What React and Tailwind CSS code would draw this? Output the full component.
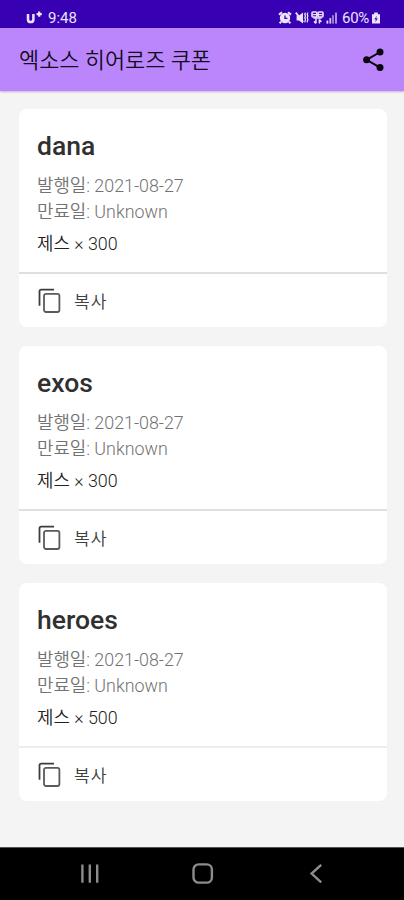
import React from 'react';

const COUPONS = [
  { code: 'dana', issued: '2021-08-27', expires: 'Unknown', reward: '제스 × 300', divider: 'bg-[#dfdfdf]' },
  { code: 'exos', issued: '2021-08-27', expires: 'Unknown', reward: '제스 × 300', divider: 'bg-[#dfdfdf]' },
  { code: 'heroes', issued: '2021-08-27', expires: 'Unknown', reward: '제스 × 500', divider: 'bg-[#ededed]' },
];

function StatusBar() {
  return (
    <div className="flex h-7 shrink-0 items-end justify-between bg-[#3700b3] pb-[2px] pl-[26px] pr-[24px] text-[#ebe4f8]">
      <div className="flex items-center">
        <svg className="h-[14px] w-[17px]" viewBox="0 0 17 14" fill="none" stroke="currentColor">
          <path d="M2 3v5.4a2.7 2.7 0 0 0 5.4 0V3" strokeWidth="2.5" />
          <path d="M13.2 0.6v5.2M10.6 3.2h5.2" strokeWidth="2.2" />
        </svg>
        <span className="ml-[5px] text-[15px] leading-4">9:48</span>
      </div>
      <div className="flex items-center">
        {/* alarm */}
        <svg className="h-[14px] w-[14px]" viewBox="0 0 14 14" fill="none" stroke="currentColor">
          <circle cx="7" cy="7" r="5.2" fill="currentColor" stroke="none" />
          <path d="M1 3.6l3-2.4M13 3.6l-3-2.4M3.2 10.6l-1.6 1.6M10.8 10.6l1.6 1.6" strokeWidth="2" />
          <path d="M7 4.4v3h2.4" stroke="#3700b3" strokeWidth="1.3" />
        </svg>
        {/* mute + vibrate */}
        <svg className="ml-[3px] h-[14px] w-[14px]" viewBox="0 0 14 14" fill="none" stroke="currentColor">
          <path d="M1.6 4.6H4L8 1.6v10.8L4 9.4H1.6z" fill="currentColor" stroke="none" />
          <path d="M0.8 1.6l7.4 9.4" strokeWidth="1.8" />
          <path d="M10.4 1.6l-.6 1.7.6 1.7-.6 1.7.6 1.7-.6 3M12.8 1.6l-.6 1.7.6 1.7-.6 1.7.6 1.7-.6 3" strokeWidth="1.3" />
        </svg>
        {/* network */}
        <svg className="ml-[2px] h-[14px] w-[13px]" viewBox="0 0 13 14" fill="none" stroke="currentColor">
          <rect x="1" y="1" width="4.9" height="5" rx="1" strokeWidth="1.6" />
          <rect x="7.1" y="1" width="4.9" height="5" rx="1" strokeWidth="1.6" />
          <path d="M1.2 3.6h10.6M2.4 7h8.2" strokeWidth="1.4" />
          <path d="M5 7.6v4.6M3 10.4l2 2M8.4 12.6V8.2M8.4 8.8l2 2" strokeWidth="1.5" />
        </svg>
        {/* signal */}
        <svg className="ml-[2px] h-[14px] w-[12px]" viewBox="0 0 12 14" fill="currentColor">
          <rect x="0.5" y="9.6" width="1.8" height="3" />
          <rect x="3.4" y="7" width="1.8" height="5.6" opacity="0.85" />
          <rect x="6.2" y="4.2" width="1.6" height="8.4" opacity="0.65" />
          <rect x="9.2" y="1.6" width="1.6" height="11" opacity="0.8" />
        </svg>
        <span className="ml-[4px] text-[15px] leading-4 tracking-[-0.3px]">60%</span>
        {/* battery */}
        <svg className="ml-[3px] h-[13px] w-[8px]" viewBox="0 0 8 13">
          <path d="M2.2 0.4h3.6v1.8H8V11.6H0V2.2h2.2z" fill="currentColor" />
          <path d="M4.8 3.8L2.4 7.4h1.6L3.2 10.2 5.8 6.4H4.2z" fill="#3700b3" />
        </svg>
      </div>
    </div>
  );
}

function AppBar() {
  return (
    <header className="flex h-[63px] shrink-0 items-center justify-between bg-[#bb86fc] pl-[19px] pr-[17px] text-[#120c1a] shadow-[0_1px_2px_rgba(90,60,130,0.35)]">
      <h1 className="pt-[2px] text-[21.9px] leading-7 font-[350]">엑소스 히어로즈 쿠폰</h1>
      <button type="button" aria-label="공유" className="h-[28px] w-[28px]">
        <svg viewBox="0 0 28 28" className="h-[28px] w-[28px]" fill="#0b0510">
          <path d="M21.2 6L7.6 13.8l13.6 7.8" fill="none" stroke="#0b0510" strokeWidth="2" />
          <circle cx="21" cy="6" r="3.5" />
          <circle cx="7.6" cy="13.8" r="3.5" />
          <circle cx="21" cy="21.6" r="3.5" />
        </svg>
      </button>
    </header>
  );
}

function CopyIcon() {
  return (
    <svg className="h-[28px] w-[25px]" viewBox="0 0 25 28" fill="none">
      <path d="M2.5 18.8V4.2a1.6 1.6 0 0 1 1.6-1.6H17" stroke="#3c3c3c" strokeWidth="1.8" />
      <rect x="7" y="6.8" width="15.4" height="18.2" rx="2" stroke="#5a5a5a" strokeWidth="1.8" />
    </svg>
  );
}

function CouponCard({ coupon }) {
  return (
    <article className="flex h-[218px] flex-col overflow-hidden rounded-[8px] bg-white">
      <div className="h-[163px] px-[18px] pt-[20px]">
        <h2 className="text-[26.5px] leading-[34px] font-medium text-[#303030]">{coupon.code}</h2>
        <div className="mt-[10px] text-[17.85px] leading-[25.5px] font-[350] text-[#727272]">
          <p>발행일: {coupon.issued}</p>
          <p>만료일: {coupon.expires}</p>
        </div>
        <p className="mt-[7px] text-[17.85px] leading-[26px] font-[350] text-[#222]">{coupon.reward}</p>
      </div>
      <div className={`h-[2px] shrink-0 ${coupon.divider}`} />
      <button type="button" className="flex flex-1 items-center pl-[18px] pt-[1px] text-left">
        <CopyIcon />
        <span className="ml-[12px] pt-[1px] text-[17.2px] leading-6 font-[350] tracking-[0.9px] text-[#404040]">복사</span>
      </button>
    </article>
  );
}

function NavBar() {
  return (
    <nav className="flex h-[53px] shrink-0 items-center border-t border-[#555] bg-black pl-[80px]">
      <svg className="h-5 w-5" viewBox="0 0 20 20" stroke="#8c8c8c" strokeWidth="2.4">
        <path d="M2.4 0.4v18.4M9.8 0.4v18.4M17.2 0.4v18.4" />
      </svg>
      <svg className="ml-[92px] h-[22px] w-[22px]" viewBox="0 0 22 22" fill="none" stroke="#8c8c8c" strokeWidth="2.4">
        <rect x="1.5" y="1.4" width="18.4" height="18.2" rx="5.2" />
      </svg>
      <svg className="ml-[95px] h-5 w-[14px]" viewBox="0 0 14 20" fill="none" stroke="#8c8c8c" strokeWidth="2.4">
        <path d="M12.2 0.8L2.6 9.6l9.6 8.8" />
      </svg>
    </nav>
  );
}

export default function App() {
  return (
    <div className="flex h-[900px] w-full flex-col overflow-hidden bg-[#f4f4f4] font-[Roboto,'Noto_Sans_CJK_KR',sans-serif]">
      <StatusBar />
      <AppBar />
      <main className="flex flex-1 flex-col gap-[19px] pl-[19px] pr-[17px] pt-[18px]">
        {COUPONS.map((coupon) => (
          <CouponCard key={coupon.code} coupon={coupon} />
        ))}
      </main>
      <NavBar />
    </div>
  );
}
